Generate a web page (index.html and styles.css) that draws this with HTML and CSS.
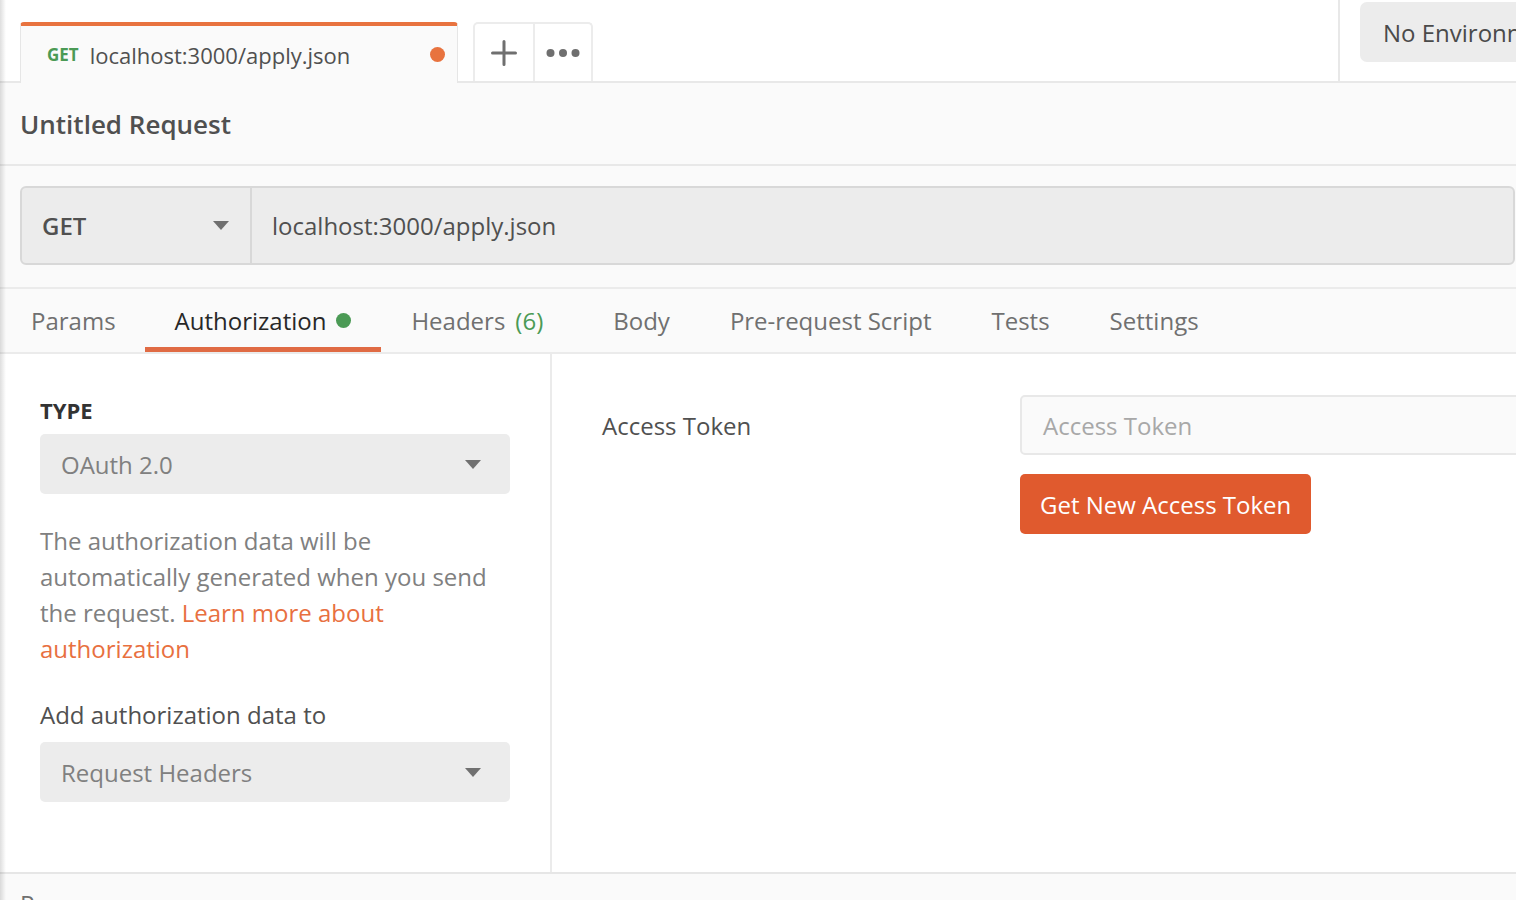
FILE: index.html
```html
<!DOCTYPE html>
<html lang="en">
<head>
<meta charset="utf-8">
<title>Untitled Request</title>
<link rel="stylesheet" href="styles.css">
</head>
<body>
<div class="app">
  <header class="topbar">
    <div class="req-tab">
      <span class="tab-method">GET</span>
      <span class="tab-url">localhost:3000/apply.json</span>
      <span class="tab-dot"></span>
    </div>
    <div class="tab-actions">
      <button class="tab-action" aria-label="New tab">
        <svg width="26" height="26" viewBox="0 0 26 26"><path d="M13 1.5v23M1.5 13h23" stroke="#6f6f6f" stroke-width="3" stroke-linecap="round" fill="none"/></svg>
      </button>
      <button class="tab-action" aria-label="More">
        <svg width="34" height="10" viewBox="0 0 34 10"><circle cx="4.5" cy="5" r="4" fill="#6f6f6f"/><circle cx="17" cy="5" r="4" fill="#6f6f6f"/><circle cx="29.5" cy="5" r="4" fill="#6f6f6f"/></svg>
      </button>
    </div>
    <div class="topbar-spacer"></div>
    <div class="topbar-divider"></div>
    <div class="env-area">
      <div class="env-select">No Environment</div>
    </div>
  </header>

  <div class="title-bar">
    <h1 class="title">Untitled Request</h1>
  </div>

  <div class="url-section">
    <div class="url-bar">
      <div class="method">
        <span>GET</span>
        <span class="caret"></span>
      </div>
      <div class="url-input">localhost:3000/apply.json</div>
    </div>
  </div>

  <nav class="req-tabs">
    <span class="req-tab-item">Params</span>
    <span class="req-tab-item active">Authorization<span class="green-dot"></span></span>
    <span class="req-tab-item">Headers<span class="count">(6)</span></span>
    <span class="req-tab-item">Body</span>
    <span class="req-tab-item">Pre-request Script</span>
    <span class="req-tab-item">Tests</span>
    <span class="req-tab-item">Settings</span>
  </nav>

  <div class="auth">
    <aside class="auth-left">
      <div class="field-label">TYPE</div>
      <div class="select">
        <span>OAuth 2.0</span>
        <span class="caret"></span>
      </div>
      <p class="auth-help">The authorization data will be automatically generated when you send the request. <a class="link" href="#">Learn more about authorization</a></p>
      <div class="sub-label">Add authorization data to</div>
      <div class="select select-second">
        <span>Request Headers</span>
        <span class="caret"></span>
      </div>
    </aside>
    <section class="auth-right">
      <div class="token-row">
        <div class="token-label">Access Token</div>
        <div class="token-input">Access Token</div>
        <div></div>
        <button class="token-btn">Get New Access Token</button>
      </div>
    </section>
  </div>

  <div class="response">
    <span class="response-title">Response</span>
  </div>
</div>
</body>
</html>
```

FILE: styles.css
```css
* {
  box-sizing: border-box;
}

html, body {
  margin: 0;
  padding: 0;
  background: #ffffff;
}

body {
  font-family: "Open Sans", "Noto Sans", sans-serif;
  color: #505050;
}

.app {
  position: relative;
  width: 1516px;
  height: 900px;
  overflow: hidden;
  background: #fafafa;
}

.app::before {
  content: "";
  position: absolute;
  left: 0;
  top: 0;
  bottom: 0;
  width: 6px;
  background: linear-gradient(to right, rgba(0, 0, 0, 0.13), rgba(0, 0, 0, 0));
  pointer-events: none;
  z-index: 10;
}

/* ---------- top bar ---------- */
.topbar {
  display: flex;
  align-items: flex-end;
  height: 83px;
  padding-left: 20px;
  background: #ffffff;
  border-bottom: 2px solid #e8e8e8;
}

.req-tab {
  position: relative;
  z-index: 1;
  display: flex;
  align-items: center;
  flex-shrink: 0;
  width: 438px;
  height: 61px;
  margin-bottom: -2px;
  padding: 0 12px 0 26px;
  background: #fafafa;
  border-top: 4px solid #e8733f;
  border-left: 1px solid #e6e6e6;
  border-right: 1px solid #e6e6e6;
  border-radius: 4px 4px 0 0;
}

.tab-method {
  font-size: 17px;
  font-weight: 700;
  color: #4b9a55;
  margin-right: 11px;
}

.tab-url {
  flex: 1;
  font-size: 22px;
  color: #505050;
}

.tab-dot {
  width: 15px;
  height: 15px;
  border-radius: 50%;
  background: #e8733f;
}

.tab-actions {
  display: flex;
  flex-shrink: 0;
  height: 59px;
  margin-left: 15px;
  border: 2px solid #ececec;
  border-bottom: none;
  border-radius: 5px 5px 0 0;
  background: #ffffff;
}

.tab-action {
  display: flex;
  align-items: center;
  justify-content: center;
  width: 58px;
  padding: 0;
  border: none;
  background: transparent;
}

.tab-action + .tab-action {
  border-left: 2px solid #ececec;
}

.topbar-spacer {
  flex: 1;
}

.topbar-divider {
  align-self: stretch;
  flex-shrink: 0;
  width: 2px;
  background: #e8e8e8;
}

.env-area {
  flex: 0 0 176px;
  min-width: 0;
  overflow: hidden;
  align-self: flex-start;
  padding-left: 20px;
  padding-top: 2px;
}

.env-select {
  display: flex;
  align-items: center;
  width: 260px;
  height: 60px;
  padding-left: 23px;
  background: #ececec;
  border-radius: 7px;
  font-size: 24px;
  color: #4a4a4a;
  white-space: nowrap;
}

/* ---------- title ---------- */
.title-bar {
  display: flex;
  align-items: center;
  height: 83px;
  padding-left: 20px;
  border-bottom: 2px solid #e8e8e8;
}

.title {
  margin: 0;
  font-size: 26px;
  font-weight: 600;
  color: #505050;
}

/* ---------- url bar ---------- */
.url-section {
  padding: 20px 1px 22px 20px;
  border-bottom: 2px solid #ebebeb;
}

.url-bar {
  display: flex;
  height: 79px;
  background: #ececec;
  border: 2px solid #d8d8d8;
  border-radius: 6px;
}

.method {
  display: flex;
  align-items: center;
  justify-content: space-between;
  width: 230px;
  padding: 0 21px 0 20px;
  border-right: 2px solid #d8d8d8;
  font-size: 24px;
  font-weight: 600;
  color: #505050;
}

.caret {
  width: 0;
  height: 0;
  border-left: 8px solid transparent;
  border-right: 8px solid transparent;
  border-top: 9px solid #707070;
}

.url-input {
  display: flex;
  align-items: center;
  padding-left: 20px;
  font-size: 24px;
  color: #505050;
}

/* ---------- request tabs ---------- */
.req-tabs {
  display: flex;
  height: 65px;
  border-bottom: 2px solid #ebebeb;
}

.req-tab-item {
  display: flex;
  align-items: center;
  height: 63px;
  padding: 0 30px;
  font-size: 24px;
  color: #707070;
  white-space: nowrap;
}

.req-tab-item:first-child {
  padding-left: 31px;
  padding-right: 29px;
}

.req-tab-item.active {
  color: #282828;
  box-shadow: inset 0 -5px 0 #e06b44;
}

.green-dot {
  width: 15px;
  height: 15px;
  margin-left: 10px;
  border-radius: 50%;
  background: #4b9a55;
}

.count {
  margin: 0 10px 0 10px;
  color: #4b9a55;
}

/* ---------- auth area ---------- */
.auth {
  display: flex;
  height: 518px;
  background: #ffffff;
}

.auth-left {
  flex: 0 0 552px;
  width: 552px;
  padding: 42px 40px 0 40px;
  border-right: 2px solid #ebebeb;
}

.field-label {
  font-size: 22px;
  font-weight: 700;
  line-height: 28px;
  color: #333333;
}

.select {
  display: flex;
  align-items: center;
  justify-content: space-between;
  height: 60px;
  margin-top: 10px;
  padding: 0 29px 0 21px;
  background: #ececec;
  border-radius: 5px;
  font-size: 24px;
  color: #808080;
}

.auth-help {
  margin: 29px 0 0 0;
  font-size: 24px;
  line-height: 36px;
  color: #808080;
}

.link {
  color: #e8703f;
  text-decoration: none;
}

.sub-label {
  margin-top: 30px;
  font-size: 24px;
  line-height: 36px;
  color: #505050;
}

.select-second {
  margin-top: 9px;
}

.auth-right {
  flex: 1;
  min-width: 0;
  overflow: hidden;
  padding: 41px 0 0 50px;
}

.token-row {
  display: grid;
  grid-template-columns: 418px 600px;
  row-gap: 19px;
}

.token-label {
  display: flex;
  align-items: center;
  font-size: 24px;
  color: #505050;
}

.token-input {
  display: flex;
  align-items: center;
  height: 60px;
  padding-left: 21px;
  background: #fafafa;
  border: 2px solid #e8e8e8;
  border-radius: 5px;
  font-size: 24px;
  color: #a8a8a8;
}

.token-btn {
  justify-self: start;
  height: 60px;
  padding: 0 20px;
  background: #e05a2e;
  border: none;
  border-radius: 5px;
  font-family: "Open Sans", "Noto Sans", sans-serif;
  font-size: 24px;
  color: #ffffff;
}

/* ---------- response ---------- */
.response {
  padding: 12px 0 0 20px;
  border-top: 2px solid #e6e6e6;
  background: #fafafa;
}

.response-title {
  font-size: 24px;
  line-height: 36px;
  color: #707070;
}
```
